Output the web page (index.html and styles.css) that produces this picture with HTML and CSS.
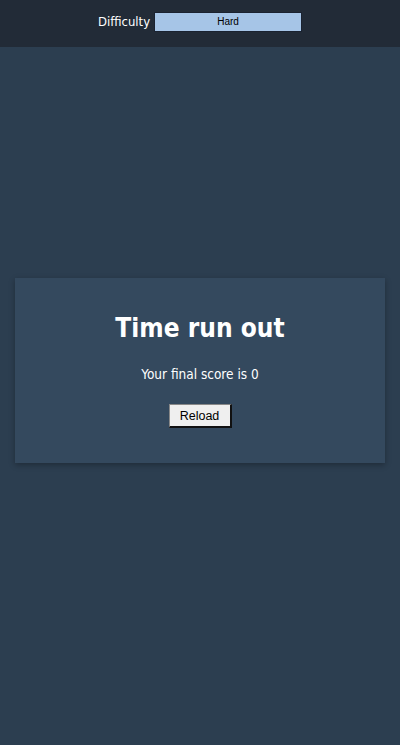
FILE: index.html
```html
<!DOCTYPE html>
<html>
<head>
<meta charset="utf-8">
<link rel="stylesheet" href="styles.css">
</head>
<body>
<header class="topbar">
  <label class="label">Difficulty</label>
  <div class="select">Hard</div>
</header>
<main class="main">
  <section class="card">
    <h1 class="title">Time run out</h1>
    <p class="score">Your final score is 0</p>
    <button class="reload">Reload</button>
  </section>
</main>
</body>
</html>
```
FILE: styles.css
```css
html, body {
  margin: 0;
  padding: 0;
}
body {
  width: 400px;
  height: 745px;
  background: #2c3e50;
  font-family: "DejaVu Sans Condensed", "DejaVu Sans", Verdana, sans-serif;
  color: #fff;
  overflow: hidden;
}
.topbar {
  height: 47px;
  background: #222b37;
  display: flex;
  align-items: flex-start;
  justify-content: center;
  padding-top: 12px;
  box-sizing: border-box;
  gap: 4px;
}
.label {
  font-size: 13px;
  line-height: 20px;
}
.select {
  width: 146px;
  height: 18px;
  background: #a6c5e7;
  border: 1px solid #1a2230;
  color: #000;
  font-family: "Liberation Sans", Arial, sans-serif;
  font-size: 10px;
  line-height: 18px;
  text-align: center;
}
.main {
  padding: 231px 15px 0;
}
.card {
  background: #34495e;
  height: 185px;
  box-sizing: border-box;
  padding-top: 34px;
  text-align: center;
  box-shadow: 0 2px 6px rgba(0,0,0,0.3);
}
.title {
  margin: 0;
  font-size: 26px;
  line-height: 32px;
  font-weight: bold;
}
.score {
  margin: 21px 0 0;
  font-size: 13.5px;
  line-height: 18px;
}
.reload {
  margin-top: 21px;
  width: 63px;
  height: 24px;
  background: #efefef;
  border-style: solid;
  border-color: #888 #111 #111 #888;
  border-width: 1px 2px 2px 1px;
  color: #000;
  font-family: "Liberation Sans", Arial, sans-serif;
  font-size: 12.5px;
  padding: 0;
}
```
